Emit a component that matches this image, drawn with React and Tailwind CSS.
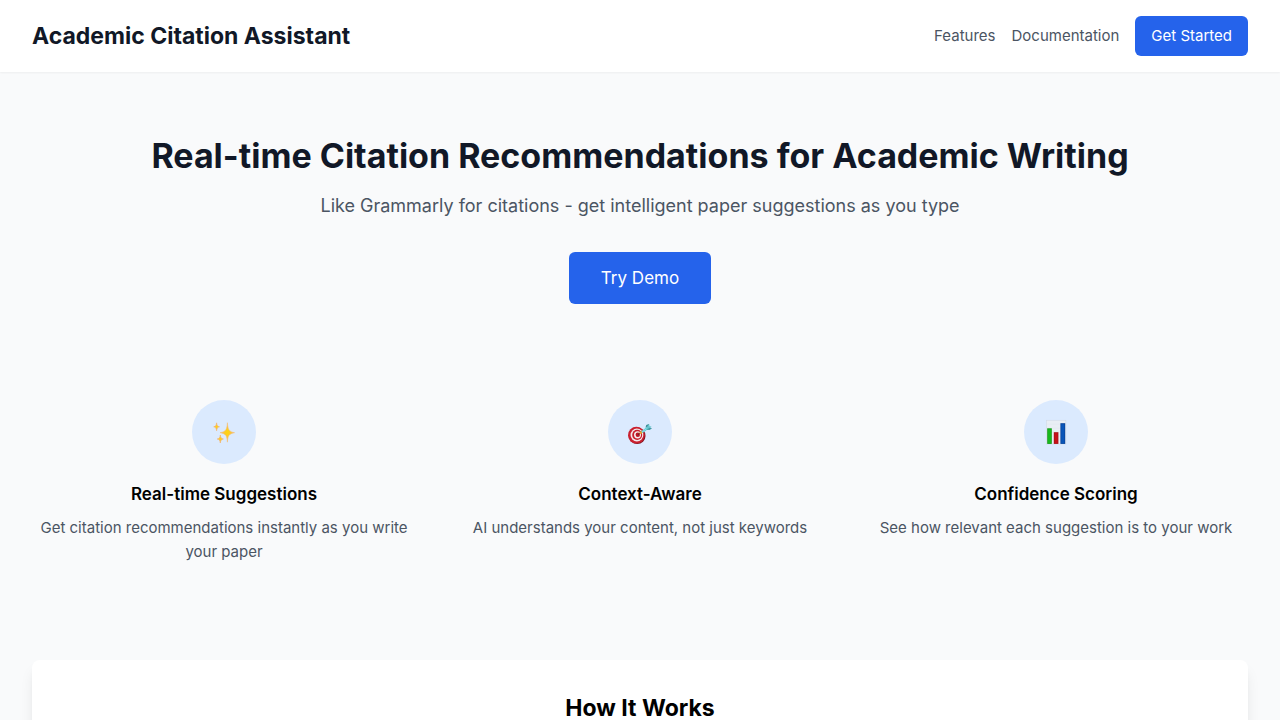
function SparklesIcon() {
  return (
    <svg viewBox="0 0 32 32" className="size-8" role="img" aria-label="Sparkles">
      <defs>
        <radialGradient id="spark">
          <stop offset="0" stopColor="#ffd60a" />
          <stop offset="0.4" stopColor="#fbc92d" />
          <stop offset="1" stopColor="#f3b58c" />
        </radialGradient>
      </defs>
      <g fill="url(#spark)">
        <path d="M19.4 6.7C19.9 13.6 21 15.7 26.6 16.7C21 17.7 19.9 19.5 19.4 26.2C18.9 19.5 17.8 17.7 12 16.7C17.8 15.7 18.9 13.6 19.4 6.7Z" stroke="#f5bd6a" strokeWidth="0.5" />
        <path d="M8.6 6.8C9 9.6 9.5 10.4 11.5 10.8C9.5 11.2 9 12 8.6 14.8C8.2 12 7.7 11.2 5.7 10.8C7.7 10.4 8.2 9.6 8.6 6.8Z" stroke="#f3b06a" strokeWidth="0.6" />
        <path d="M12.3 19C12.7 21.8 13.3 22.6 15.4 23C13.3 23.4 12.7 24.2 12.3 27C11.9 24.2 11.3 23.4 9.2 23C11.3 22.6 11.9 21.8 12.3 19Z" stroke="#f3b06a" strokeWidth="0.6" />
      </g>
    </svg>
  );
}

function TargetIcon() {
  return (
    <svg viewBox="0 0 32 32" className="size-8" role="img" aria-label="Target">
      <ellipse cx="13.2" cy="19.9" rx="8.3" ry="8.2" fill="#7c1420" />
      <ellipse cx="12.4" cy="19.2" rx="8.4" ry="8.4" fill="#c9202f" />
      <ellipse cx="12.9" cy="19" rx="6.4" ry="6.5" fill="#f4e9ea" />
      <ellipse cx="13.2" cy="18.9" rx="5" ry="5.1" fill="#c8202e" />
      <ellipse cx="13.5" cy="18.8" rx="3.5" ry="3.6" fill="#f6eded" />
      <ellipse cx="13.8" cy="18.7" rx="2.2" ry="2.3" fill="#b91826" />
      <path d="M14 18.7L17 16.3" stroke="#3d3535" strokeWidth="0.8" />
      <path d="M15.8 17.5L18.4 15.4" stroke="#e5a62e" strokeWidth="2.2" />
      <path d="M17.2 15.2L22.3 11.4L23.8 13.2L18.6 17Z" fill="#5ccbd2" />
      <path d="M17.9 16.1L23 12.4" stroke="#a0e9e9" strokeWidth="0.7" />
      <path d="M21.5 11.7L22.2 9.1L24.9 7.9L25 10.4Z" fill="#3d929b" />
      <path d="M22.6 13.7L25.6 14.1L28 12.3L25 10.9Z" fill="#4299a3" />
      <path d="M22.1 12.1L25.2 7.9L25.5 10.2L27.7 10.5L23.2 13.3Z" fill="#67c5ce" />
    </svg>
  );
}

function BarChartIcon() {
  return (
    <svg viewBox="0 0 32 32" className="size-8" role="img" aria-label="Bar chart">
      <rect x="6.3" y="4.2" width="19.6" height="23.8" fill="#e9eef4" stroke="#ccd6e2" strokeWidth="0.5" />
      <path d="M6.4 8.2H25.8M6.4 12.2H25.8M6.4 16.2H25.8M6.4 20.2H25.8M6.4 24.2H25.8" stroke="#dce4ec" strokeWidth="0.4" />
      <rect x="7.2" y="12.3" width="4.6" height="15.6" fill="#169c1b" />
      <rect x="8" y="13.2" width="3" height="14" fill="#18b91d" />
      <rect x="13.8" y="16.2" width="4.6" height="11.7" fill="#a90f17" />
      <rect x="14.6" y="17.1" width="3" height="10.1" fill="#c71119" />
      <rect x="20.4" y="7.2" width="4.8" height="20.7" fill="#07439a" />
      <rect x="21.2" y="8.1" width="3.2" height="19.1" fill="#0955b8" />
    </svg>
  );
}

const features = [
  {
    Icon: SparklesIcon,
    title: "Real-time Suggestions",
    text: "Get citation recommendations instantly as you write your paper",
  },
  {
    Icon: TargetIcon,
    title: "Context-Aware",
    text: "AI understands your content, not just keywords",
  },
  {
    Icon: BarChartIcon,
    title: "Confidence Scoring",
    text: "See how relevant each suggestion is to your work",
  },
];

export default function App() {
  return (
    <div className="min-h-screen bg-[#f9fafb] font-['Inter',sans-serif] text-[15px] leading-6 text-black antialiased">
      <header className="bg-white shadow-xs">
        <div className="mx-auto flex max-w-7xl items-center justify-between px-8 py-4">
          <h1 className="text-[23px] leading-8 font-bold text-[#111827]">Academic Citation Assistant</h1>
          <nav className="flex items-center gap-4">
            <a href="#features" className="text-[#4b5563] hover:text-[#111827]">Features</a>
            <a href="#documentation" className="text-[#4b5563] hover:text-[#111827]">Documentation</a>
            <button type="button" className="rounded-md bg-[#2563eb] px-4 py-2 text-white hover:bg-[#1d4ed8]">
              Get Started
            </button>
          </nav>
        </div>
      </header>

      <main className="mx-auto max-w-7xl px-8 py-16">
        <section className="text-center">
          <h2 className="mb-4 text-[34px] leading-10 font-bold text-[#111827]">
            Real-time Citation Recommendations for Academic Writing
          </h2>
          <p className="mb-8 text-[18px] leading-7 text-[#4b5563]">
            Like Grammarly for citations - get intelligent paper suggestions as you type
          </p>
          <button type="button" className="rounded-md bg-[#2563eb] px-8 py-3 text-[17px] leading-7 text-white hover:bg-[#1d4ed8]">
            Try Demo
          </button>
        </section>

        <section id="features" className="mt-24 grid gap-8 md:grid-cols-3">
          {features.map(({ Icon, title, text }) => (
            <article key={title} className="text-center">
              <div className="mx-auto mb-4 flex size-16 items-center justify-center rounded-full bg-[#dbeafe]">
                <Icon />
              </div>
              <h3 className="mb-2 text-[17px] leading-7 font-semibold">{title}</h3>
              <p className="text-[#4b5563]">{text}</p>
            </article>
          ))}
        </section>

        <section id="documentation" className="mt-24 rounded-lg bg-white p-8 shadow-lg">
          <h2 className="text-center text-[23px] leading-8 font-bold">How It Works</h2>
        </section>
      </main>
    </div>
  );
}
